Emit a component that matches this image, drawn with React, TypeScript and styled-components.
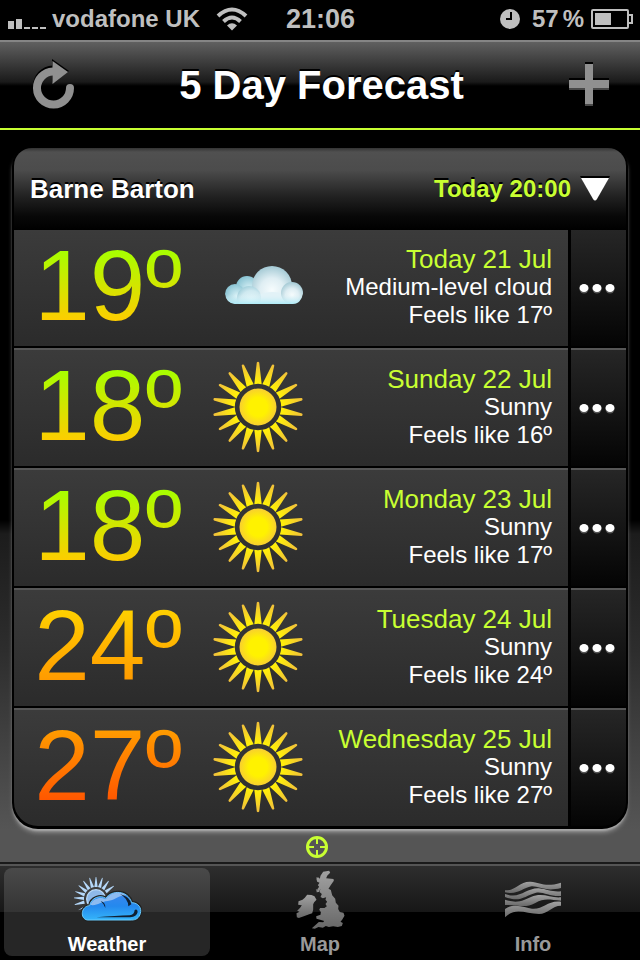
import React from "react";
import styled, { createGlobalStyle, css } from "styled-components";

const LIME = "#c8ff32";

const GlobalStyle = createGlobalStyle`
  *, *::before, *::after { box-sizing: border-box; }
  body {
    margin: 0;
    background: #000;
    color: #fff;
    font-family: "Liberation Sans", Arial, Helvetica, sans-serif;
  }
  button { font: inherit; color: inherit; background: none; border: 0; padding: 0; cursor: pointer; }
  h1, h2, p, ul { margin: 0; padding: 0; }
  ul { list-style: none; }
  svg { display: block; }
`;

const Screen = styled.div`
  display: flex;
  flex-direction: column;
  min-height: 100vh;
`;

const StatusBar = styled.div`
  display: grid;
  grid-template-columns: 1fr auto 1fr;
  align-items: center;
  height: 40px;
  padding: 0 7px 2px 8px;
  color: #bfbfbf;
  font-size: 24px;
  font-weight: bold;
`;

const StatusGroup = styled.div<{ $end?: boolean }>`
  display: flex;
  align-items: center;
  gap: ${(p) => (p.$end ? "7px" : "16px")};
  justify-content: ${(p) => (p.$end ? "flex-end" : "flex-start")};
`;

const Carrier = styled.span`
  display: flex;
  align-items: center;
  gap: 6px;
  line-height: 38px;
`;

const Charge = styled.span`
  display: flex;
  gap: 4px;
  margin-left: 5px;
`;

const Clock = styled.time`
  font-size: 27px;
  line-height: 38px;
`;

const NavBar = styled.header`
  display: flex;
  align-items: center;
  justify-content: space-between;
  height: 90px;
  padding: 0 26px 0 29px;
  border-top: 2px solid #858585;
  border-bottom: 2px solid ${LIME};
  background: linear-gradient(#606060, #1a1a1a 40px, #000 44px);
`;

const NavTitle = styled.h1`
  font-size: 40px;
  line-height: 48px;
  text-shadow: 0 -2px 0 #000;
`;

const IconButton = styled.button`
  display: grid;
  place-items: center;
  width: 50px;
  height: 60px;
  padding-bottom: 2px;
`;

const Content = styled.main`
  flex: 1;
  display: flex;
  flex-direction: column;
  padding: 18px 12px 0;
  background: linear-gradient(#000 390px, #1c1c1c 404px, #2d2d2d 520px, #555 700px);
`;

const Panel = styled.section`
  padding: 0 2px 3px;
  border-radius: 18px 18px 26px 26px;
  background: #000;
  box-shadow: 0 3px 2px -1px #a8a8a8, 0 5px 4px -1px #888;
`;

const PanelHeader = styled.div`
  display: flex;
  align-items: center;
  justify-content: space-between;
  height: 82px;
  padding: 0 16px;
  border-radius: 18px 18px 0 0;
  background: linear-gradient(#333, #505050 4px, #4c4c4c 22px, #222 48px, #080808 68px, #000);
`;

const Place = styled.h2`
  font-size: 26px;
  line-height: 32px;
  text-shadow: 0 -2px 0 #000;
`;

const TimeButton = styled.button`
  display: flex;
  align-items: center;
  gap: 9px;
  color: ${LIME};
  font-size: 24px;
  font-weight: bold;
  line-height: 32px;
  text-shadow: 0 -2px 0 #000;
`;

const DayList = styled.ul`
  overflow: hidden;
  border-radius: 0 0 24px 24px;
`;

const DayRow = styled.li`
  display: grid;
  grid-template-columns: 1fr 55px;
  gap: 3px;
  min-height: 116px;

  & + & {
    margin-top: 2px;
    min-height: 118px;
  }
  & + & > * {
    border-top: 2px solid #565656;
  }
`;

const DayMain = styled.div`
  display: grid;
  grid-template-columns: 168px 152px 1fr;
  align-items: center;
  padding-right: 16px;
  background: linear-gradient(#3b3b3b, #2b2b2b);
`;

const Temperature = styled.span<{ $from: string; $to: string }>`
  justify-self: end;
  padding-bottom: 6px;
  font-size: 100px;
  line-height: 110px;
  color: transparent;
  background: linear-gradient(${(p) => p.$from} 20px, ${(p) => p.$to} 92px);
  background-clip: text;
  -webkit-background-clip: text;
`;

const Symbol = styled.span`
  justify-self: center;
`;

const Details = styled.div`
  padding-bottom: 3px;
  text-align: right;
  white-space: nowrap;
  font-size: 24px;
  line-height: 28px;
`;

const DayName = styled.p`
  color: ${LIME};
  font-size: 26px;
`;

const MoreButton = styled.button`
  display: grid;
  place-items: center;
  padding-right: 3px;
  background: linear-gradient(#262626, #040404);
`;

const Locate = styled.div`
  display: flex;
  justify-content: center;
  padding: 7px 6px 3px 0;
`;

const TabBar = styled.nav`
  display: grid;
  grid-template-columns: repeat(3, 1fr);
  gap: 7px;
  padding: 2px 4px 4px;
  border-top: 2px solid #1a1a1a;
  background: linear-gradient(#555 2px, #2e2e2e 2px, #171717 48px, #000 48px);
`;

const Tab = styled.button<{ $active?: boolean }>`
  display: flex;
  flex-direction: column;
  align-items: center;
  height: 88px;
  margin-top: 2px;
  border-radius: 8px;
  color: #999;
  font-size: 20px;
  font-weight: bold;
  line-height: 24px;
  ${(p) =>
    p.$active &&
    css`
      color: #fff;
      background: linear-gradient(#4a4a4a, #343434 44px, #262626 44px);
    `}
`;

const TabIcon = styled.span`
  display: grid;
  place-items: center;
  height: 66px;
  padding-bottom: 2px;
`;

const SignalIcon = () => (
  <svg width="38" height="20" fill="#bfbfbf" aria-label="Signal">
    <path d="M0 12h6v8H0zM8 10h6v10H8zM16 18h6v2h-6zM24 18h6v2h-6zM32 18h6v2h-6z" />
  </svg>
);

const WifiIcon = () => (
  <svg width="32" height="24" viewBox="0 0 32 24" aria-label="Wi-Fi">
    <g fill="none" stroke="#bfbfbf" strokeWidth="4">
      <path d="M2 9Q16 -4 30 9" />
      <path d="M7.5 14.5Q16 6.5 24.500 14.500" />
    </g>
    <path d="M11 18.500Q16 14 21 18.500L16 23.500Z" fill="#bfbfbf" />
  </svg>
);

const AlarmIcon = () => (
  <svg width="20" height="20" viewBox="0 0 20 20" aria-label="Alarm">
    <circle cx="10" cy="10" r="10" fill="#bfbfbf" />
    <path d="M11 3v7H6" fill="none" stroke="#000" strokeWidth="2" />
  </svg>
);

const BatteryIcon = () => (
  <svg width="42" height="20" viewBox="0 0 42 20" aria-label="Battery">
    <rect x="1" y="1" width="36" height="18" rx="1" fill="none" stroke="#bfbfbf" strokeWidth="2" />
    <path d="M38 6h3v8h-3" fill="none" stroke="#bfbfbf" strokeWidth="2" />
    <rect x="4" y="4" width="16" height="12" fill="#bfbfbf" />
  </svg>
);

const RefreshIcon = () => (
  <svg width="42" height="50" viewBox="0 0 42 50">
    <path d="M19 0L36 12L19 23Z" fill="#000" />
    <path d="M20 10.500A16.500 16.500 0 1 0 37 27" fill="none" stroke="#000" strokeWidth="8" />
    <path d="M20 12.500A16.500 16.500 0 1 0 37 29" fill="none" stroke="#909090" strokeWidth="8" strokeLinecap="round" />
    <path d="M19.500 2L35 13L19.500 25Z" fill="#909090" />
  </svg>
);

const PlusIcon = () => (
  <svg width="40" height="44" viewBox="0 0 40 44">
    <path d="M16 0h8v16h16v8H24v16h-8V24H0v-8h16z" fill="#000" />
    <path d="M16 4h8v16h16v8H24v16h-8V28H0v-8h16z" fill="#484848" />
    <path d="M16 2h8v16h16v8H24v16h-8V26H0v-8h16z" fill="#909090" />
  </svg>
);

const ArrowIcon = () => (
  <svg width="30" height="26" viewBox="0 0 30 26">
    <path d="M0 0h30L17 22h-4z" fill="#000" />
    <path d="M1 2h28L17 23Q15 26 13 23z" fill="#fff" />
  </svg>
);

const DotsIcon = () => (
  <svg width="36" height="14" viewBox="0 0 36 14">
    {[5, 18, 31].map((x) => (
      <g key={x}>
        <ellipse cx={x} cy="8" rx="4.500" ry="4.500" fill="#555" />
        <ellipse cx={x} cy="7" rx="4.500" ry="4" fill="#fff" />
      </g>
    ))}
  </svg>
);

const rays = Array.from({ length: 18 }, (_, i) => i * 20);

const SunIcon = () => (
  <svg width="90" height="94" viewBox="-45 -46 90 94" role="img" aria-label="Sunny">
    <defs>
      <radialGradient id="disc">
        <stop offset="0.500" stopColor="#fff200" />
        <stop offset="1" stopColor="#f8cf30" />
      </radialGradient>
      <radialGradient id="rays" gradientUnits="userSpaceOnUse" cx="0" cy="0" r="45">
        <stop offset="0.550" stopColor="#ffee0a" />
        <stop offset="1" stopColor="#f0bf3c" />
      </radialGradient>
    </defs>
    {rays.map((a) => (
      <path key={a} d="M-3.700 -22.800Q0 -23.600 3.700 -22.800L1.200 -44.500Q0 -46 -1.200 -44.500Z" fill="url(#rays)" transform={`rotate(${a})`} />
    ))}
    <circle r="18.500" fill="url(#disc)" />
  </svg>
);

const CloudIcon = () => (
  <svg width="90" height="44" viewBox="-12 0 90 44" role="img" aria-label="Cloud">
    <defs>
      <radialGradient id="puff" cx="0.500" cy="0.600" r="0.600">
        <stop offset="0" stopColor="#f6fcfd" />
        <stop offset="0.500" stopColor="#dfeef3" />
        <stop offset="1" stopColor="#a3c9d4" />
      </radialGradient>
      <radialGradient id="smallPuff" cx="0.600" cy="0.600" r="0.650">
        <stop offset="0" stopColor="#dcf3f8" />
        <stop offset="1" stopColor="#85c1d1" />
      </radialGradient>
      <radialGradient id="frontPuff" cx="0.600" cy="0.650" r="0.650">
        <stop offset="0" stopColor="#e8f9fc" />
        <stop offset="0.700" stopColor="#cfe9f0" />
        <stop offset="1" stopColor="#a9d3de" />
      </radialGradient>
      <linearGradient id="cloudBase" x2="0" y2="1">
        <stop offset="0" stopColor="#e4f3f7" stopOpacity="0" />
        <stop offset="1" stopColor="#aeebf7" />
      </linearGradient>
      <clipPath id="cloudClip"><path d="M0 0H78V28Q76 38 67 38H10Q1 37 0 28Z" /></clipPath>
    </defs>
    <g clipPath="url(#cloudClip)">
      <circle cx="22" cy="21" r="11" fill="url(#smallPuff)" />
      <circle cx="10" cy="28" r="10" fill="url(#smallPuff)" />
      <circle cx="47" cy="20" r="20" fill="url(#puff)" />
      <path d="M30 30Q48 22 64 30V38H30Z" fill="#e2f2f7" />
      <circle cx="67" cy="27" r="11" fill="url(#puff)" />
      <circle cx="24" cy="32" r="12" fill="url(#frontPuff)" />
      <path d="M0 28H78V38H0Z" fill="url(#cloudBase)" />
    </g>
  </svg>
);

const TargetIcon = () => (
  <svg width="22" height="22" viewBox="0 0 22 22" role="img" aria-label="Current location">
    <circle cx="11" cy="11" r="9.500" fill="none" stroke={LIME} strokeWidth="3" />
    <path d="M11 2v6M11 14v6M2 11h6M14 11h6" stroke={LIME} strokeWidth="2" />
  </svg>
);

const sunbeams = [-105, -87, -70, -52, -35, -17, 0, 17, 35, 54];

const WeatherTabIcon = () => (
  <svg width="69" height="47" viewBox="220 172 207 141">
    <defs>
      <linearGradient id="tabCloud" x2="0" y2="1">
        <stop offset="0" stopColor="#3b86ee" />
        <stop offset="0.500" stopColor="#2489ee" />
        <stop offset="1" stopColor="#35b5fa" />
      </linearGradient>
    </defs>
    <g transform="translate(289 241)">
      {sunbeams.map((a) => (
        <path key={a} d="M-5 -36H5L1 -66H-1Z" fill="#b5d8fa" transform={`rotate(${a})`} />
      ))}
      <path d="M-54 34L-32 20L-28 25Z" fill="#b5d8fa" />
      <circle r="28" fill="#8fb9e8" stroke="#b9dbfb" strokeWidth="4" />
    </g>
    <path d="M263 304C240 300 244 262 270 261C274 236 304 228 318 239C335 214 384 213 396 252C416 252 427 269 422 284C418 299 408 304 396 304Z" fill="url(#tabCloud)" stroke="#222" strokeWidth="10" />
    <path d="M263 304C240 300 244 262 270 261C274 236 304 228 318 239C335 214 384 213 396 252C416 252 427 269 422 284C418 299 408 304 396 304Z" fill="url(#tabCloud)" stroke="#69cafc" strokeWidth="3" />
    <path d="M272 259C278 239 303 233 318 242C334 218 364 216 379 230C351 232 345 246 324 247C302 249 295 262 272 259Z" fill="#8dbbf0" />
    <path d="M303 247Q318 252 317 268Q310 252 303 247ZM361 226Q391 234 395 257L386 263Q385 239 361 226ZM290 296Q350 291 390 290Q404 288 405 274Q413 270 414 280Q411 295 392 296Z" fill="#102032" />
  </svg>
);

const MapTabIcon = () => (
  <svg width="51" height="59" viewBox="226 150 152 177">
    <defs>
      <linearGradient id="tabGrey" x2="0" y2="1">
        <stop offset="0" stopColor="#a2a2a2" />
        <stop offset="1" stopColor="#686868" />
      </linearGradient>
    </defs>
    <g fill="url(#tabGrey)">
      <path d="M310 155L328 152L331 158L322 167L319 175L341 177L342 182L333 195L326 206L333 210L337 226L346 236L348 248L356 257L355 267L360 276L371 278L374 287L367 299L362 305L369 309L366 318L354 321L340 319L327 321L318 318L309 323L296 321L285 326L276 325L287 315L297 306L310 307L313 303L301 299L290 296L289 289L302 284L303 276L298 269L301 264L314 264L321 259L317 252L322 245L317 239L319 232L309 235L302 231L306 222L299 216L302 206L297 216L290 217L293 207L298 200L294 196L299 188L292 185L290 178L294 171L300 176L302 167Z" />
      <path d="M262 224L275 225L284 229L290 239L283 247L280 253L280 269L277 280L268 283L252 289L237 294L231 292L230 280L239 275L232 272L241 263L246 256L235 254L236 244L248 239L255 233Z" />
      <path d="M289 172l5 3-2 5zM288 207l5 2-3 7z" />
    </g>
  </svg>
);

const InfoTabIcon = () => (
  <svg width="56" height="38" viewBox="222 180 168 114">
    <g fill="url(#tabGrey)">
      <path d="M222 211C254 213 264 184 298 185C330 188 342 203 390 188V204C342 216 324 198 302 199C272 204 261 226 222 217Z" />
      <path d="M222 222C268 239 284 204 323 205C350 208 365 217 390 214V228C355 230 337 214 315 218C281 227 268 249 222 231Z" />
      <path d="M222 239C262 253 280 239 300 231C335 216 358 235 390 232V242C357 240 340 233 313 249C281 267 258 253 222 255Z" />
      <path d="M222 267C252 246 282 264 303 266C337 269 350 240 390 245V257C363 257 350 282 324 282C285 281 252 260 222 292Z" />
    </g>
  </svg>
);

interface Day {
  temp: number;
  feels: number;
  date: string;
  summary: string;
  icon: "sun" | "cloud";
  from: string;
  to: string;
}

const days: Day[] = [
  { temp: 19, feels: 17, date: "Today 21 Jul", summary: "Medium-level cloud", icon: "cloud", from: "#a6ff00", to: "#ffcc00" },
  { temp: 18, feels: 16, date: "Sunday 22 Jul", summary: "Sunny", icon: "sun", from: "#a6ff00", to: "#ffcc00" },
  { temp: 18, feels: 17, date: "Monday 23 Jul", summary: "Sunny", icon: "sun", from: "#a6ff00", to: "#ffcc00" },
  { temp: 24, feels: 24, date: "Tuesday 24 Jul", summary: "Sunny", icon: "sun", from: "#ffd000", to: "#ff9900" },
  { temp: 27, feels: 27, date: "Wednesday 25 Jul", summary: "Sunny", icon: "sun", from: "#ff9c00", to: "#ff5500" },
];

export default function App() {
  return (
    <Screen>
      <GlobalStyle />
      <StatusBar>
        <StatusGroup>
          <Carrier>
            <SignalIcon />
            vodafone UK
          </Carrier>
          <WifiIcon />
        </StatusGroup>
        <Clock>21:06</Clock>
        <StatusGroup $end>
          <AlarmIcon />
          <Charge>
            <span>57</span>
            <span>%</span>
          </Charge>
          <BatteryIcon />
        </StatusGroup>
      </StatusBar>

      <NavBar>
        <IconButton aria-label="Refresh"><RefreshIcon /></IconButton>
        <NavTitle>5 Day Forecast</NavTitle>
        <IconButton aria-label="Add location"><PlusIcon /></IconButton>
      </NavBar>

      <Content>
        <Panel>
          <PanelHeader>
            <Place>Barne Barton</Place>
            <TimeButton>
              Today 20:00
              <ArrowIcon />
            </TimeButton>
          </PanelHeader>
          <DayList>
            {days.map((day) => (
              <DayRow key={day.date}>
                <DayMain>
                  <Temperature $from={day.from} $to={day.to}>{day.temp}º</Temperature>
                  <Symbol>{day.icon === "sun" ? <SunIcon /> : <CloudIcon />}</Symbol>
                  <Details>
                    <DayName>{day.date}</DayName>
                    <p>{day.summary}</p>
                    <p>Feels like {day.feels}º</p>
                  </Details>
                </DayMain>
                <MoreButton aria-label={`More about ${day.date}`}><DotsIcon /></MoreButton>
              </DayRow>
            ))}
          </DayList>
        </Panel>
        <Locate><TargetIcon /></Locate>
      </Content>

      <TabBar>
        <Tab $active>
          <TabIcon><WeatherTabIcon /></TabIcon>
          Weather
        </Tab>
        <Tab>
          <TabIcon><MapTabIcon /></TabIcon>
          Map
        </Tab>
        <Tab>
          <TabIcon><InfoTabIcon /></TabIcon>
          Info
        </Tab>
      </TabBar>
    </Screen>
  );
}
